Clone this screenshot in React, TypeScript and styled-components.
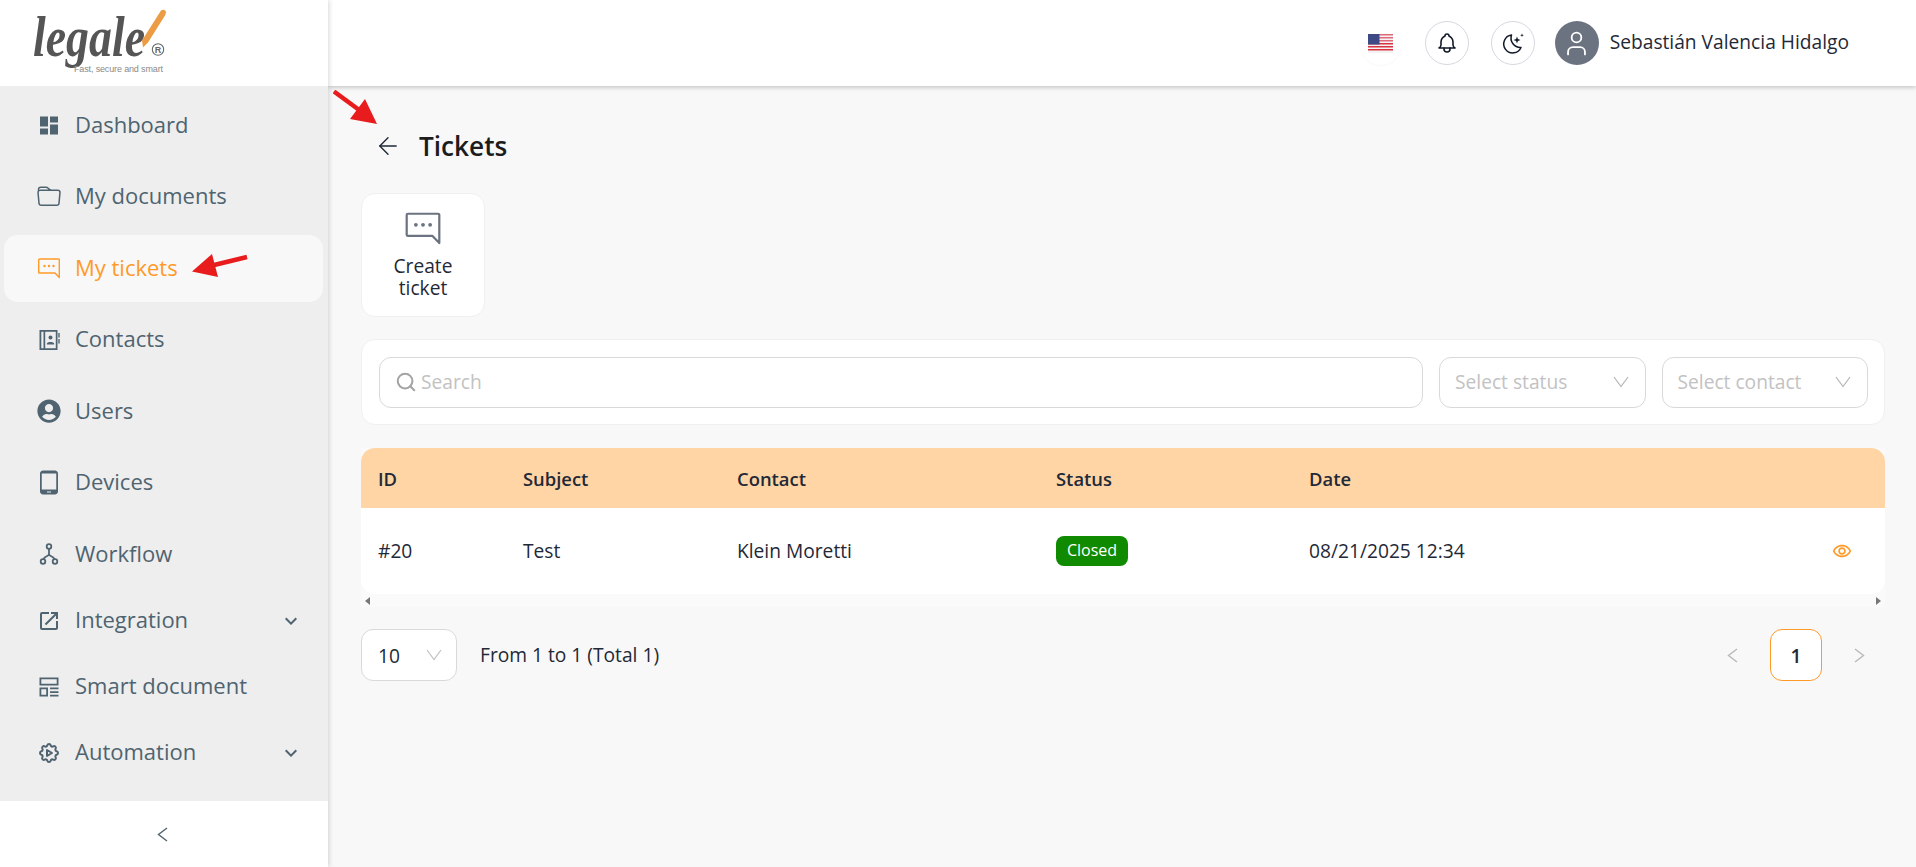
import styled, { createGlobalStyle } from "styled-components";
import { BsFolder } from "react-icons/bs";
import { FaUserCircle } from "react-icons/fa";
import {
  MdDashboard,
  MdKeyboardArrowDown,
  MdOpenInNew,
  MdOutlineRemoveRedEye,
  MdTabletAndroid,
} from "react-icons/md";
import { TbBell, TbSettingsAutomation } from "react-icons/tb";
import { ArrowLeft, Search, User } from "lucide-react";
import type { ReactNode } from "react";

const GlobalStyle = createGlobalStyle`
  html, body {
    margin: 0;
    padding: 0;
    height: 100%;
    overflow: hidden;
    font-family: "Open Sans", "Noto Sans", sans-serif;
    background: #f8f8f8;
  }
`;

const BubbleIcon = ({ size = 24 }: { size?: number }) => (
  <svg width={size} height={size} viewBox="0 0 24 24" fill="none" stroke="currentColor" strokeWidth="1.4">
    <path d="M2.500 3h19a.8.8 0 0 1 .8.8V21.500L18 17H2.500a.8.8 0 0 1-.8-.8V3.800a.8.8 0 0 1 .8-.8z" strokeLinejoin="round" />
    <circle cx="7.500" cy="10" r="1.200" fill="currentColor" stroke="none" />
    <circle cx="12" cy="10" r="1.200" fill="currentColor" stroke="none" />
    <circle cx="16.500" cy="10" r="1.200" fill="currentColor" stroke="none" />
  </svg>
);

const ContactsIcon = () => (
  <svg width="24" height="24" viewBox="0 0 24 24" fill="currentColor">
    <path d="M2.500 2h18v20h-18zM4.300 3.800v16.400h2.200V3.800zM8.200 3.800v16.400h10.600V3.800z" fillRule="evenodd" />
    <circle cx="13.500" cy="9.500" r="2" />
    <path d="M9.800 16c0-2.600 7.400-2.600 7.400 0v.6H9.800z" />
    <path d="M21.300 5h1.400v4.500h-1.400zM21.300 11h1.400v4.500h-1.400z" />
  </svg>
);

const WorkflowIcon = () => (
  <svg width="24" height="24" viewBox="0 0 24 24" fill="none" stroke="currentColor" strokeWidth="1.8">
    <circle cx="12" cy="4.500" r="2.300" />
    <circle cx="6" cy="19.500" r="2.300" />
    <circle cx="18" cy="19.500" r="2.300" />
    <path d="M12 6.800V12M12 12c0 2.500-4.500 2-5.500 5.200M12 12c0 2.500 4.500 2 5.500 5.200" />
  </svg>
);

const SmartDocIcon = () => (
  <svg width="24" height="24" viewBox="0 0 24 24" fill="currentColor">
    <path d="M2.500 2.500h19v8h-19zM4.300 4.300v4.400h15.400V4.300z" fillRule="evenodd" />
    <path d="M2.500 12.500h8.500v9H2.500zM4.300 14.300v5.400h4.900v-5.400z" fillRule="evenodd" />
    <path d="M13 12.500h8.500v1.800H13zM13 16.200h8.500V18H13zM13 19.700h8.500v1.800H13z" />
  </svg>
);

const MoonIcon = () => (
  <svg width="24" height="24" viewBox="0 0 24 24" fill="none" stroke="currentColor" strokeWidth="1.5">
    <path d="M10.500 4a9 9 0 1 0 9.500 12.500A9.500 9.500 0 0 1 10.500 4z" strokeLinejoin="round" />
    <path d="M16 5.500l.9 2.600 2.600.9-2.600.9-.9 2.600-.9-2.600-2.600-.9 2.600-.9z" fill="currentColor" stroke="none" />
    <path d="M21 2.500l.5 1.300 1.300.5-1.300.5-.5 1.300-.5-1.300-1.300-.5 1.300-.5z" fill="currentColor" stroke="none" />
  </svg>
);

// thin chevrons, the icon packages draw them narrower than the picture
const Caret = ({ color = "#b5b5b5" }: { color?: string }) => (
  <svg width="16" height="12" viewBox="0 0 16 12" fill="none" stroke={color} strokeWidth="1.2">
    <path d="M1 1l7 9.500L15 1" />
  </svg>
);

const Chevron = ({ dir, color }: { dir: "left" | "right"; color: string }) => (
  <svg width="11" height="15" viewBox="0 0 11 15" fill="none" stroke={color} strokeWidth="1.4">
    <path d={dir === "left" ? "M10 1L1.500 7.500 10 14" : "M1 1l8.500 6.500L1 14"} />
  </svg>
);

const Flag = () => (
  <svg width="25" height="19" viewBox="0 0 25 19">
    <rect width="25" height="19" fill="#f4f4f6" />
    {[0, 3, 6, 9, 12, 15].map((y) => (
      <rect key={y} y={y} width="25" height="1.5" fill={y < 9 ? "#e06a78" : "#d8343f"} />
    ))}
    <rect width="11.500" height="10.500" fill="#3d4a86" />
  </svg>
);

const Logo = () => (
  <svg width="180" height="86" viewBox="0 0 180 86">
    <text
      x="33"
      y="56"
      fontFamily="Liberation Serif"
      fontStyle="italic"
      fontWeight="700"
      fontSize="56"
      fill="#555555"
      textLength="112"
      lengthAdjust="spacingAndGlyphs"
    >
      legale
    </text>
    <path d="M161 10.500c2-1.500 5-.5 5 2l-1 3-17 27-5 5-1-7z" fill="#eb9c44" />
    <circle cx="158" cy="49.500" r="5.700" fill="none" stroke="#666666" strokeWidth="1.100" />
    <text x="154.800" y="53" fontFamily="Liberation Sans" fontWeight="700" fontSize="9" fill="#666666">R</text>
    <text x="74" y="72" fontFamily="Liberation Sans" fontSize="9" fill="#8a8a8a" textLength="89">Fast, secure and smart</text>
  </svg>
);

type NavEntry = { label: string; icon: ReactNode; active?: boolean; expand?: boolean };

const mainNav: NavEntry[] = [
  { label: "Dashboard", icon: <MdDashboard size={25} /> },
  { label: "My documents", icon: <BsFolder size={24} /> },
  { label: "My tickets", icon: <BubbleIcon />, active: true },
  { label: "Contacts", icon: <ContactsIcon /> },
  { label: "Users", icon: <FaUserCircle size={24} /> },
  { label: "Devices", icon: <MdTabletAndroid size={25} /> },
  { label: "Workflow", icon: <WorkflowIcon /> },
];

const compactNav: NavEntry[] = [
  { label: "Integration", icon: <MdOpenInNew size={24} />, expand: true },
  { label: "Smart document", icon: <SmartDocIcon /> },
  { label: "Automation", icon: <TbSettingsAutomation size={24} />, expand: true },
];

const renderItem = (item: NavEntry, compact: boolean) => (
  <NavItem key={item.label} $active={item.active} $compact={compact}>
    <NavIcon>{item.icon}</NavIcon>
    <NavLabel>{item.label}</NavLabel>
    {item.expand && (
      <NavCaret>
        <MdKeyboardArrowDown size={24} />
      </NavCaret>
    )}
  </NavItem>
);

const App = () => {
  return (
    <Page>
      <GlobalStyle />
      <Sidebar>
        <LogoBox>
          <Logo />
        </LogoBox>
        <Nav>
          <NavGroup>{mainNav.map((i) => renderItem(i, false))}</NavGroup>
          <div>{compactNav.map((i) => renderItem(i, true))}</div>
        </Nav>
        <Collapse>
          <Chevron dir="left" color="#4f6470" />
        </Collapse>
      </Sidebar>

      <Main>
        <Header>
          <FlagButton>
            <Flag />
          </FlagButton>
          <RoundButton>
            <TbBell size={24} strokeWidth={1.6} />
          </RoundButton>
          <RoundButton>
            <MoonIcon />
          </RoundButton>
          <Avatar>
            <User size={29} strokeWidth={1.5} />
          </Avatar>
          <UserName>Sebastián Valencia Hidalgo</UserName>
        </Header>

        <Content>
          <TitleRow>
            <BackButton>
              <ArrowLeft size={28} strokeWidth={1.2} />
            </BackButton>
            <Title>Tickets</Title>
          </TitleRow>

          <ActionCard>
            <ActionIcon>
              <BubbleIcon size={38} />
            </ActionIcon>
            <ActionText>
              Create
              <br />
              ticket
            </ActionText>
          </ActionCard>

          <FilterCard>
            <SearchBox>
              <Search size={22} color="#a3a3a3" strokeWidth={2.2} />
              <Placeholder>Search</Placeholder>
            </SearchBox>
            <SelectBox>
              <Placeholder>Select status</Placeholder>
              <Caret />
            </SelectBox>
            <SelectBox>
              <Placeholder>Select contact</Placeholder>
              <Caret />
            </SelectBox>
          </FilterCard>

          <TableWrap>
            <TableClip>
              <Table>
                <colgroup>
                  <col width="145" />
                  <col width="214" />
                  <col width="319" />
                  <col width="253" />
                  <col />
                  <col width="80" />
                </colgroup>
                <thead>
                  <tr>
                    <Th>ID</Th>
                    <Th>Subject</Th>
                    <Th>Contact</Th>
                    <Th>Status</Th>
                    <Th>Date</Th>
                    <Th />
                  </tr>
                </thead>
                <tbody>
                  <tr>
                    <Td>#20</Td>
                    <Td>Test</Td>
                    <Td>Klein Moretti</Td>
                    <Td>
                      <Badge>Closed</Badge>
                    </Td>
                    <Td>08/21/2025 12:34</Td>
                    <ActionTd>
                      <MdOutlineRemoveRedEye size={20} />
                    </ActionTd>
                  </tr>
                </tbody>
              </Table>
            </TableClip>
            <ScrollBar>
              <ScrollArrow $dir="left" />
              <ScrollArrow $dir="right" />
            </ScrollBar>
          </TableWrap>

          <Pager>
            <PageSize>
              <span>10</span>
              <Caret color="#c0c0c0" />
            </PageSize>
            <PageInfo>From 1 to 1 (Total 1)</PageInfo>
            <PageNav>
              <Chevron dir="left" color="#b8b8b8" />
              <PageCurrent>1</PageCurrent>
              <Chevron dir="right" color="#b8b8b8" />
            </PageNav>
          </Pager>
        </Content>
      </Main>

      <TitleArrow width="46" height="36" viewBox="0 0 46 36">
        <path d="M1 1.500L33 25" stroke="#e81c1c" strokeWidth="4.500" />
        <path d="M44 34L17 29L32 9z" fill="#e81c1c" />
      </TitleArrow>
      <NavArrow width="58" height="26" viewBox="0 0 58 26">
        <path d="M57 4L20 13" stroke="#e81c1c" strokeWidth="4.500" />
        <path d="M2 18.500L22 1L28 24z" fill="#e81c1c" />
      </NavArrow>
    </Page>
  );
};

export default App;

const Page = styled.div`
  position: relative;
  display: flex;
  width: 100%;
  height: 100vh;
  overflow: hidden;
`;

const Sidebar = styled.aside`
  position: relative;
  z-index: 2;
  flex: 0 0 328px;
  display: flex;
  flex-direction: column;
  background: #ffffff;
  box-shadow: 1px 0 5px rgba(0, 0, 0, 0.16);
`;

const LogoBox = styled.div`
  height: 86px;
  background: #ffffff;
  overflow: hidden;
`;

const Nav = styled.nav`
  flex: 1;
  background: #eeeeee;
  padding-top: 5.5px;
`;

const NavGroup = styled.div`
  display: flex;
  flex-direction: column;
  gap: 4.5px;
`;

const NavItem = styled.div<{ $active?: boolean; $compact?: boolean }>`
  display: flex;
  align-items: center;
  gap: 14px;
  height: ${({ $compact }) => ($compact ? "66px" : "67px")};
  margin: 0 5px 0 4px;
  padding: 0 20px 0 33px;
  border-radius: 14px;
  background: ${({ $active }) => ($active ? "#f8f8f8" : "transparent")};
  color: ${({ $active }) => ($active ? "#ff9a28" : "#4f6470")};
`;

const NavIcon = styled.span`
  display: flex;
  justify-content: center;
  align-items: center;
  width: 24px;
  height: 24px;
`;

const NavLabel = styled.span`
  flex: 1;
  padding-bottom: 3px;
  font-size: 22px;
`;

const NavCaret = styled.span`
  display: flex;
`;

const Collapse = styled.div`
  height: 66px;
  display: flex;
  justify-content: center;
  align-items: center;
  padding: 1px 4px 0 0;
  box-sizing: border-box;
`;

const Main = styled.div`
  flex: 1;
  min-width: 0;
  display: flex;
  flex-direction: column;
  background: #f8f8f8;
`;

const Header = styled.header`
  flex: 0 0 86px;
  display: flex;
  justify-content: flex-end;
  align-items: center;
  padding-right: 67px;
  background: #ffffff;
  box-shadow: 0 1px 5px rgba(0, 0, 0, 0.25);
`;

const FlagButton = styled.div`
  width: 42px;
  height: 44px;
  margin-right: 23px;
  display: flex;
  justify-content: center;
  align-items: center;
  border-radius: 50%;
  box-shadow: 0 1px 2px rgba(0, 0, 0, 0.03);
`;

const RoundButton = styled.div`
  width: 44px;
  height: 44px;
  margin-right: 22px;
  box-sizing: border-box;
  display: flex;
  justify-content: center;
  align-items: center;
  border: 1px solid #d6d9e0;
  border-radius: 50%;
  color: #111827;
`;

const Avatar = styled.div`
  width: 44px;
  height: 44px;
  margin-left: -2px;
  display: flex;
  justify-content: center;
  align-items: center;
  border-radius: 50%;
  background: #6b7280;
  color: #ffffff;
`;

const UserName = styled.div`
  margin-left: 11px;
  padding-bottom: 3px;
  font-size: 19.2px;
  color: #1f2937;
`;

const Content = styled.main`
  flex: 1;
  padding: 33px 31px 0 33px;
`;

const TitleRow = styled.div`
  height: 54px;
  display: flex;
  align-items: center;
  margin-bottom: 20px;
`;

const BackButton = styled.span`
  display: flex;
  margin-left: 13px;
  margin-right: 17px;
  color: #1f2937;
`;

const Title = styled.h1`
  margin: 0;
  font-size: 26.2px;
  font-weight: 600;
  color: #1c1c1c;
`;

const ActionCard = styled.div`
  width: 124px;
  height: 124px;
  box-sizing: border-box;
  display: flex;
  flex-direction: column;
  align-items: center;
  padding-top: 15px;
  margin-bottom: 22px;
  background: #ffffff;
  border: 1px solid #f0f0f0;
  border-radius: 14px;
`;

const ActionIcon = styled.div`
  display: flex;
  height: 40px;
  color: #6b7280;
`;

const ActionText = styled.div`
  margin-top: 6px;
  font-size: 19.2px;
  line-height: 22px;
  text-align: center;
  color: #1f2937;
`;

const FilterCard = styled.div`
  height: 86px;
  box-sizing: border-box;
  display: flex;
  align-items: center;
  gap: 16px;
  padding: 0 16px 0 17px;
  margin-bottom: 23px;
  background: #ffffff;
  border: 1px solid #f0f0f0;
  border-radius: 14px;
`;

const SearchBox = styled.div`
  flex: 1;
  height: 51px;
  box-sizing: border-box;
  display: flex;
  align-items: center;
  gap: 4px;
  padding-left: 15px;
  background: #ffffff;
  border: 1px solid #d9d9d9;
  border-radius: 12px;
`;

const Placeholder = styled.span`
  flex: 1;
  padding-bottom: 2px;
  font-size: 19.2px;
  color: #c2c2c2;
`;

const SelectBox = styled.div`
  flex: 0 0 206.5px;
  height: 51px;
  box-sizing: border-box;
  display: flex;
  align-items: center;
  padding: 0 16px 0 15px;
  background: #ffffff;
  border: 1px solid #d9d9d9;
  border-radius: 12px;
`;

const TableWrap = styled.div`
  background: #fafafa;
`;

const TableClip = styled.div`
  overflow: hidden;
  border-radius: 14px;
  background: #ffffff;
`;

const Table = styled.table`
  width: 100%;
  border-collapse: collapse;
  table-layout: fixed;
  font-size: 19.2px;
  color: #1f2937;
`;

const Th = styled.th`
  height: 60px;
  padding: 0 0 0 17px;
  text-align: left;
  font-size: 18.4px;
  font-weight: 600;
  background: #ffd5a5;
`;

const Td = styled.td`
  height: 86px;
  padding: 0 0 2px 17px;
  box-sizing: border-box;
`;

const ActionTd = styled.td`
  padding-right: 33px;
  text-align: right;
  color: #ff9a28;
  line-height: 0;
`;

const Badge = styled.span`
  display: inline-block;
  height: 30px;
  padding: 0 11px;
  font-size: 16px;
  line-height: 29px;
  border-radius: 8px;
  color: #ffffff;
  background: #108a00;
`;

const ScrollBar = styled.div`
  height: 13px;
  display: flex;
  justify-content: space-between;
  align-items: center;
  padding: 0 4px;
`;

const ScrollArrow = styled.span<{ $dir: "left" | "right" }>`
  width: 0;
  height: 0;
  border-top: 4px solid transparent;
  border-bottom: 4px solid transparent;
  ${({ $dir }) => ($dir === "left" ? "border-right: 5px solid #777;" : "border-left: 5px solid #777;")}
`;

const Pager = styled.div`
  display: flex;
  align-items: center;
  margin-top: 22px;
`;

const PageSize = styled.div`
  width: 96px;
  height: 52px;
  box-sizing: border-box;
  display: flex;
  justify-content: space-between;
  align-items: center;
  padding: 0 14px 0 16px;
  font-size: 19.2px;
  color: #1f2937;
  background: #ffffff;
  border: 1px solid #d9d9d9;
  border-radius: 12px;
`;

const PageInfo = styled.div`
  margin-left: 23px;
  padding-bottom: 2px;
  font-size: 19.2px;
  color: #1f2937;
`;

const PageNav = styled.div`
  margin-left: auto;
  display: flex;
  align-items: center;
  gap: 32px;
  padding-right: 20px;
`;

const PageCurrent = styled.div`
  width: 52px;
  height: 52px;
  box-sizing: border-box;
  display: flex;
  justify-content: center;
  align-items: center;
  font-size: 19.2px;
  font-weight: 600;
  color: #1f2937;
  background: #ffffff;
  border: 1px solid #ff9a28;
  border-radius: 12px;
`;

const TitleArrow = styled.svg`
  position: absolute;
  z-index: 3;
  left: 333px;
  top: 90px;
`;

const NavArrow = styled.svg`
  position: absolute;
  z-index: 3;
  left: 190px;
  top: 253px;
`;
